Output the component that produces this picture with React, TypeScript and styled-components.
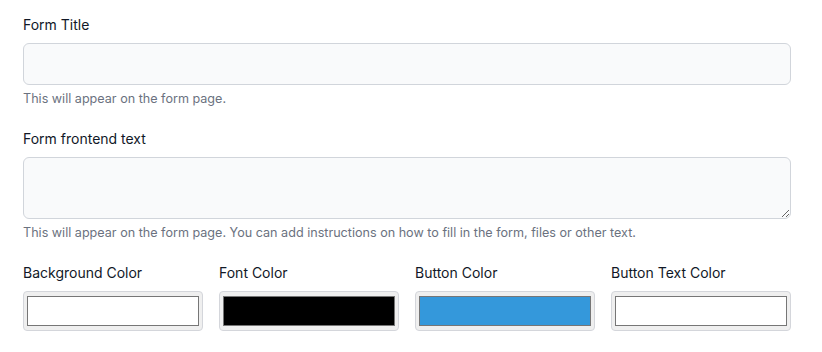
import React from "react";
import styled, { createGlobalStyle } from "styled-components";

const Global = createGlobalStyle`
  html, body { margin: 0; padding: 0; background: #ffffff; }
  body { font-family: Inter, "Noto Sans", sans-serif; -webkit-font-smoothing: antialiased; }
  * { box-sizing: border-box; }
`;

const Form = styled.form`
  width: 768px;
  margin: 15px 0 0 23px;
  display: flex;
  flex-direction: column;
  gap: 22px;
`;

const Field = styled.div`
  display: flex;
  flex-direction: column;
`;

const Label = styled.label`
  font-size: 14px;
  line-height: 20px;
  font-weight: 400;
  color: #111827;
  margin-bottom: 8px;
`;

const TextInput = styled.input`
  height: 42px;
  width: 100%;
  background: #f9fafb;
  border: 1px solid #d1d5db;
  border-radius: 6px;
  padding: 0 12px;
  font: inherit;
  font-size: 14px;
  outline: none;
`;

const TextArea = styled.textarea`
  height: 62px;
  width: 100%;
  background: #f9fafb;
  border: 1px solid #d1d5db;
  border-radius: 6px;
  padding: 8px 12px;
  font: inherit;
  font-size: 14px;
  outline: none;
  display: block;
`;

const Help = styled.p`
  margin: 6px 0 0;
  font-size: 12.6px;
  line-height: 16px;
  color: #6b7280;
`;

const ColorGrid = styled.div`
  display: grid;
  grid-template-columns: repeat(4, 1fr);
  gap: 16px;
`;

const ColorBox = styled.div`
  height: 40px;
  background: #efefef;
  border: 1px solid #d4d6db;
  border-radius: 4px;
  padding: 4px 3px;
  display: flex;
`;

const Swatch = styled.div<{ $color: string }>`
  flex: 1;
  background: ${(p) => p.$color};
  border: 1px solid #767676;
`;

const colors = [
  { label: "Background Color", value: "#ffffff" },
  { label: "Font Color", value: "#000000" },
  { label: "Button Color", value: "#3498db" },
  { label: "Button Text Color", value: "#ffffff" },
];

export default function App() {
  return (
    <>
      <Global />
      <Form onSubmit={(e) => e.preventDefault()}>
        <Field>
          <Label>Form Title</Label>
          <TextInput type="text" />
          <Help>This will appear on the form page.</Help>
        </Field>
        <Field>
          <Label>Form frontend text</Label>
          <TextArea />
          <Help>
            This will appear on the form page. You can add instructions on how to fill in the form, files or other text.
          </Help>
        </Field>
        <ColorGrid>
          {colors.map((c) => (
            <Field key={c.label}>
              <Label>{c.label}</Label>
              <ColorBox>
                <Swatch $color={c.value} />
              </ColorBox>
            </Field>
          ))}
        </ColorGrid>
      </Form>
    </>
  );
}
